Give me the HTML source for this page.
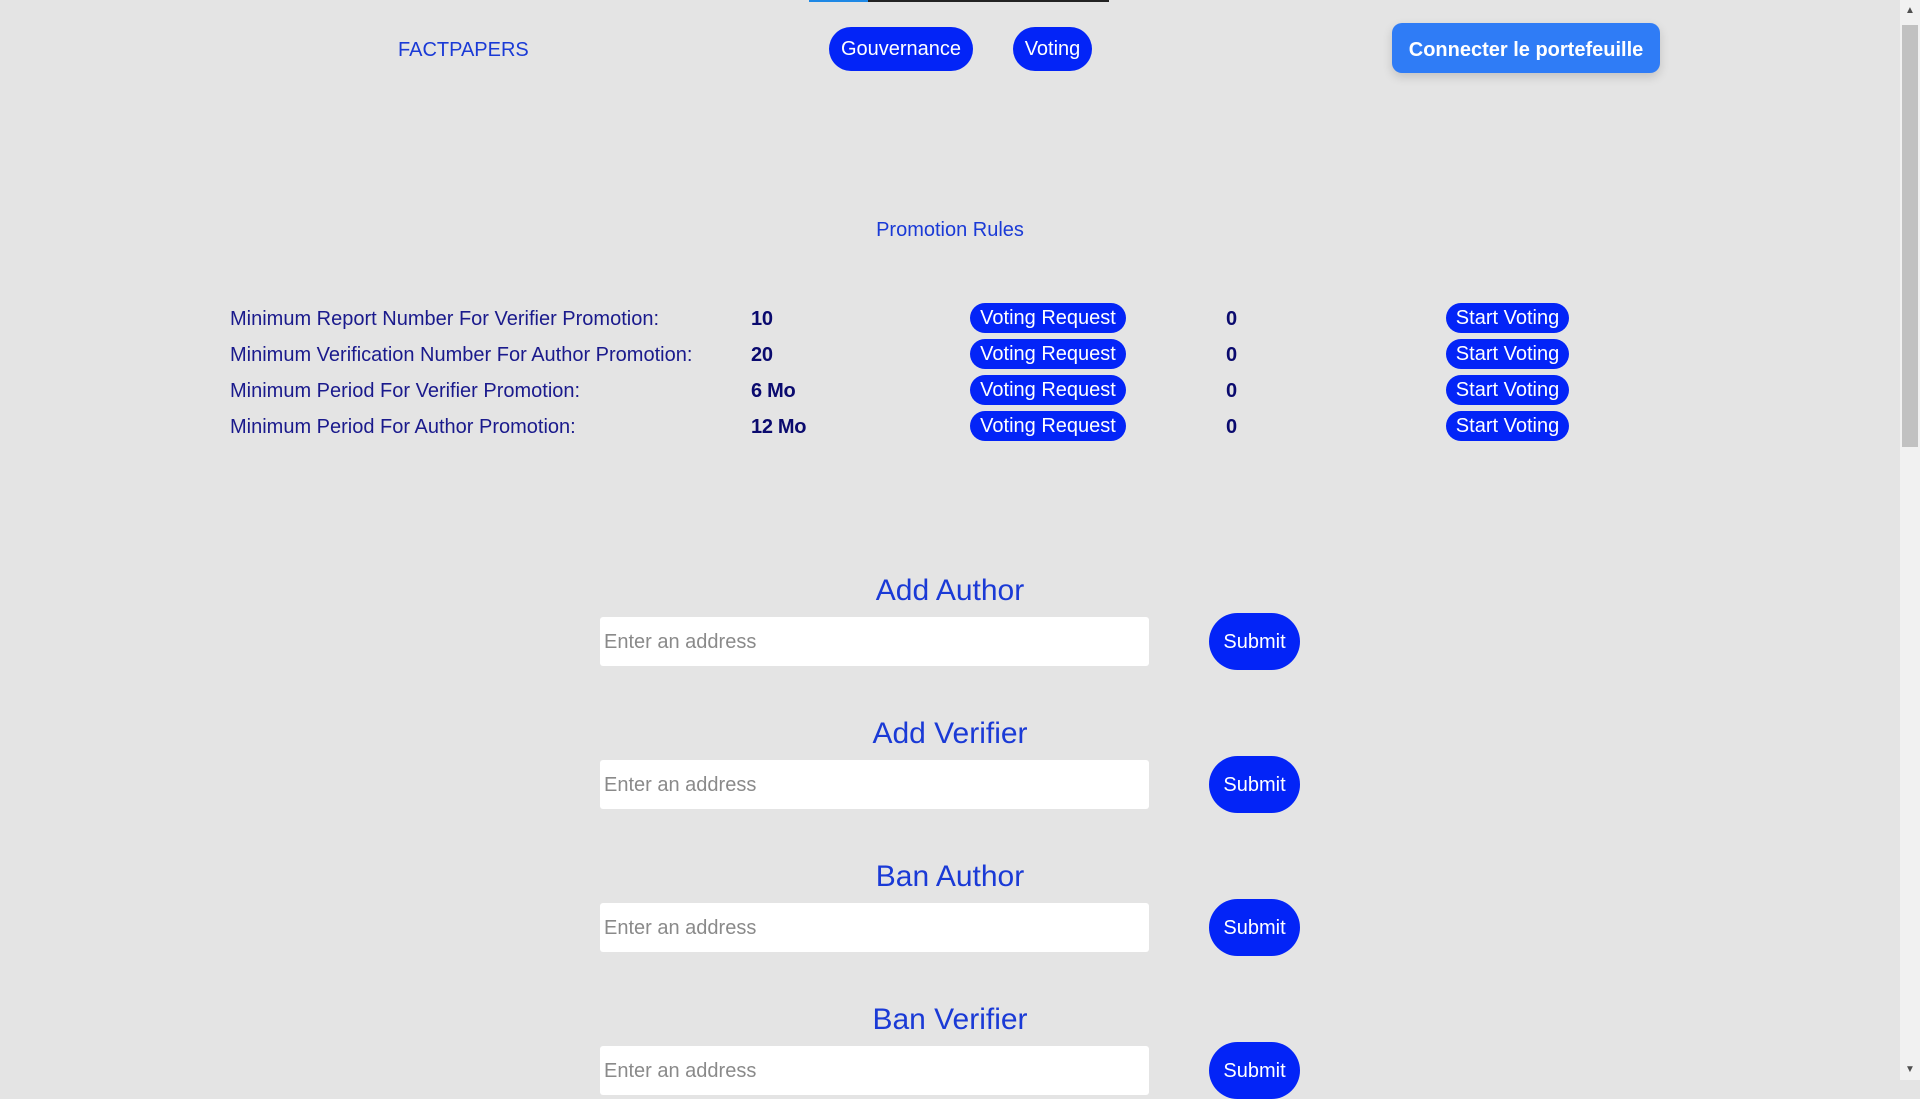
<!DOCTYPE html>
<html><head><style>
html,body{margin:0;padding:0}
body{width:1920px;height:1080px;background:#e4e4e4;font-family:"Liberation Sans",Arial,sans-serif;position:relative;overflow:hidden}
.a{position:absolute}
.pill{position:absolute;background:#0324f7;color:#fff;border-radius:22px;display:flex;align-items:center;justify-content:center}
.lbl{position:absolute;left:230px;color:#1a1a8c;font-size:20px}
.val{position:absolute;left:751px;color:#0a0a6e;font-size:20px;font-weight:bold;letter-spacing:-0.3px}
.zero{position:absolute;left:1226px;color:#0a0a6e;font-size:20px;font-weight:bold}
.vr{left:970px;width:156px;height:30px;font-size:20px;border-radius:15px;padding-top:1px;box-sizing:border-box}
.sv{left:1446px;width:123px;height:30px;font-size:20px;border-radius:15px;padding-top:1px;box-sizing:border-box}
.h{position:absolute;left:0;width:1900px;text-align:center;color:#1a3ad6;font-size:30px}
.in{position:absolute;left:600px;width:549px;height:49px;background:#fff;border-radius:3px;color:#8a8a8a;font-size:20px;line-height:51px;padding-left:4px;box-sizing:border-box}
.sub{left:1209px;width:91px;height:57px;border-radius:29px;font-size:20px;padding-top:1px;box-sizing:border-box}
</style></head><body>
<div class="a" style="left:809px;top:0;width:300px;height:2px;background:#222"></div>
<div class="a" style="left:809px;top:0;width:59px;height:2px;background:#1e88e5"></div>
<div class="a" style="left:398px;top:39px;color:#1a3ad6;font-size:20px">FACTPAPERS</div>
<div class="pill" style="left:829px;top:27px;width:144px;height:44px;font-size:20px;padding-top:1px;box-sizing:border-box">Gouvernance</div>
<div class="pill" style="left:1013px;top:27px;width:79px;height:44px;font-size:20px;padding-top:1px;box-sizing:border-box">Voting</div>
<div class="pill" style="left:1392px;top:23px;width:268px;height:50px;background:#2f7cf6;border-radius:10px;font-size:20px;font-weight:bold;box-shadow:0 4px 10px rgba(0,0,0,.15);padding-top:4px;box-sizing:border-box">Connecter le portefeuille</div>
<div class="h" style="top:219px;font-size:20px">Promotion Rules</div>

<div class="lbl" style="top:308px">Minimum Report Number For Verifier Promotion:</div><div class="val" style="top:308px">10</div><div class="pill vr" style="top:303px">Voting Request</div><div class="zero" style="top:308px">0</div><div class="pill sv" style="top:303px">Start Voting</div>
<div class="lbl" style="top:344px">Minimum Verification Number For Author Promotion:</div><div class="val" style="top:344px">20</div><div class="pill vr" style="top:339px">Voting Request</div><div class="zero" style="top:344px">0</div><div class="pill sv" style="top:339px">Start Voting</div>
<div class="lbl" style="top:380px">Minimum Period For Verifier Promotion:</div><div class="val" style="top:380px">6 Mo</div><div class="pill vr" style="top:375px">Voting Request</div><div class="zero" style="top:380px">0</div><div class="pill sv" style="top:375px">Start Voting</div>
<div class="lbl" style="top:416px">Minimum Period For Author Promotion:</div><div class="val" style="top:416px">12 Mo</div><div class="pill vr" style="top:411px">Voting Request</div><div class="zero" style="top:416px">0</div><div class="pill sv" style="top:411px">Start Voting</div>

<div class="h" style="top:574px">Add Author</div><div class="in" style="top:617px">Enter an address</div><div class="pill sub" style="top:613px">Submit</div>
<div class="h" style="top:717px">Add Verifier</div><div class="in" style="top:760px">Enter an address</div><div class="pill sub" style="top:756px">Submit</div>
<div class="h" style="top:860px">Ban Author</div><div class="in" style="top:903px">Enter an address</div><div class="pill sub" style="top:899px">Submit</div>
<div class="h" style="top:1003px">Ban Verifier</div><div class="in" style="top:1046px">Enter an address</div><div class="pill sub" style="top:1042px">Submit</div>

<div class="a" style="left:1900px;top:0;width:20px;height:1080px;background:#f1f1f1"></div>
<div class="a" style="left:1902px;top:25px;width:16px;height:422px;background:#c1c1c1"></div>
<div class="a" style="left:1905px;top:5px;font-size:10px;color:#505050">▲</div>
<div class="a" style="left:1905px;top:1064px;font-size:10px;color:#505050">▼</div>
</body></html>
